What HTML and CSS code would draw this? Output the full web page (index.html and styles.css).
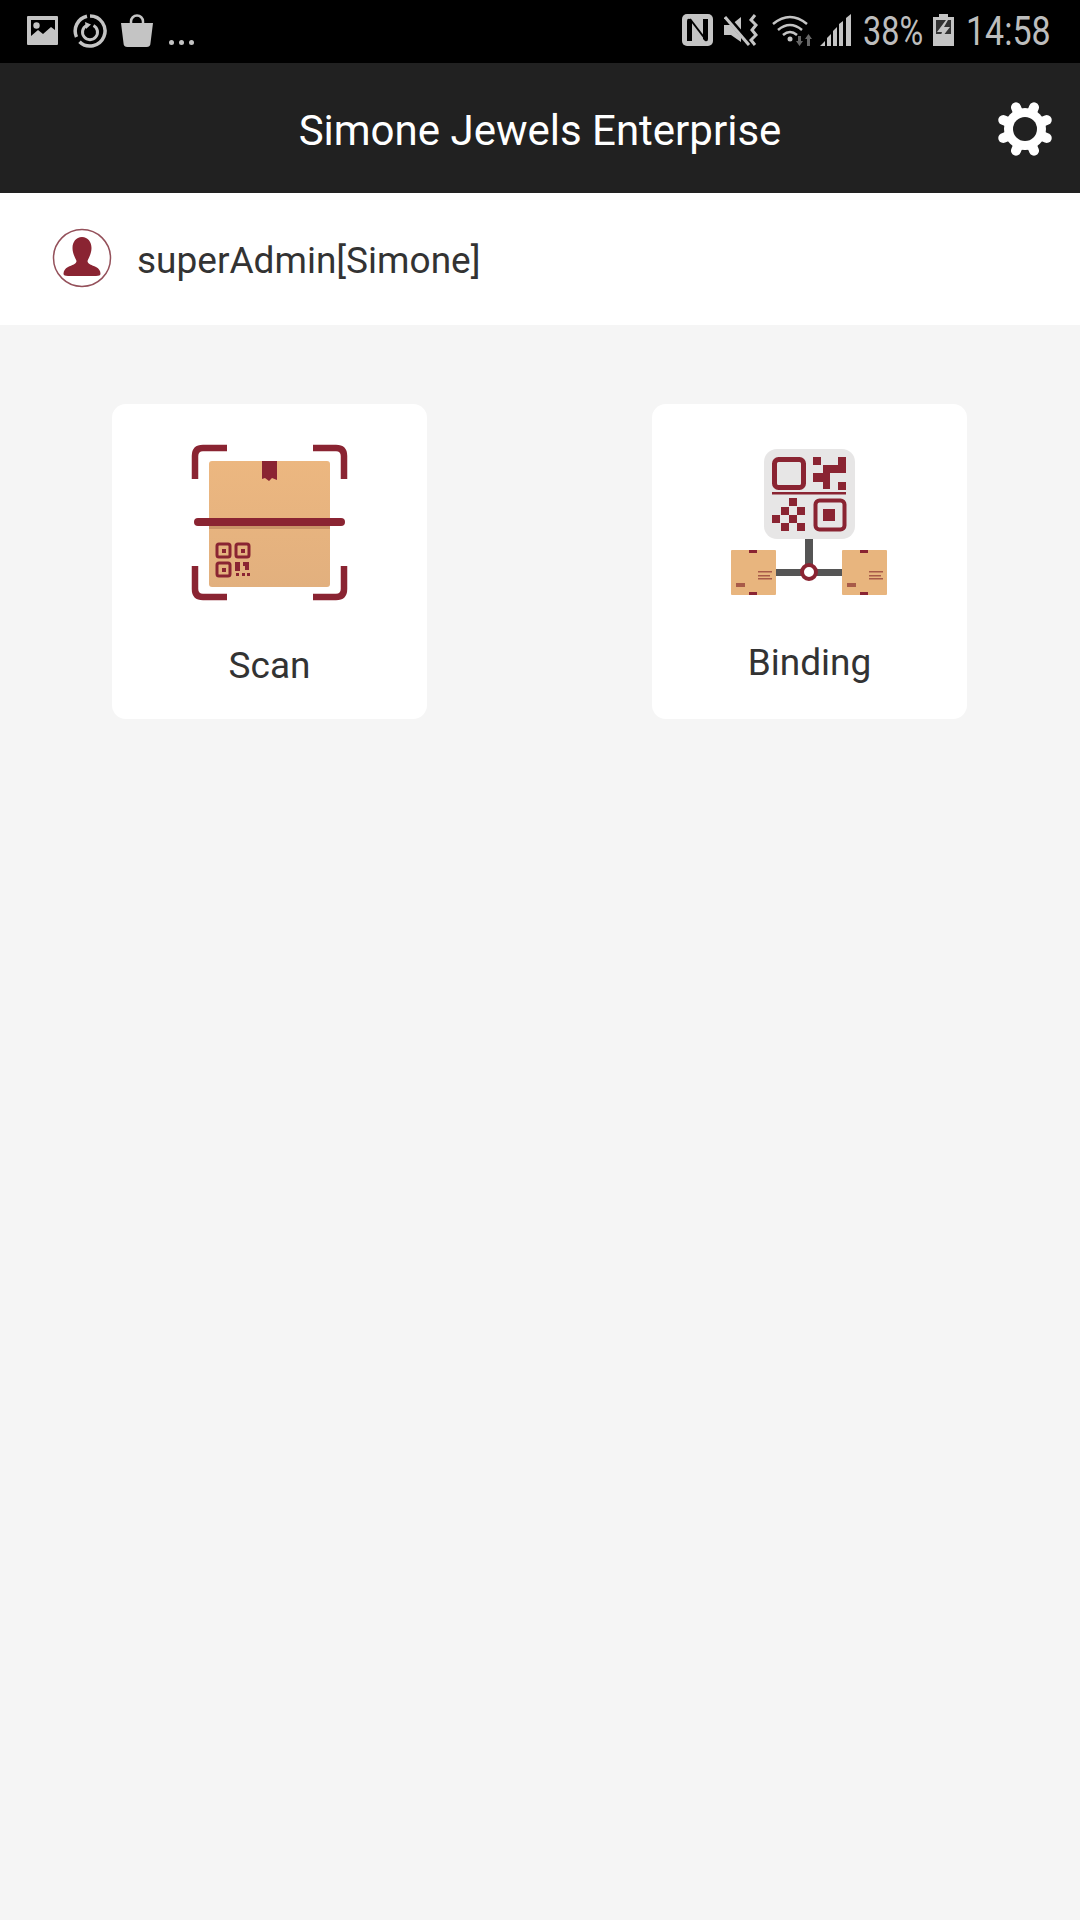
FILE: index.html
```html
<!DOCTYPE html>
<html lang="en">
<head>
    <meta charset="UTF-8">
    <meta name="viewport" content="width=device-width, initial-scale=1.0">
    <title>Simone Jewels Enterprise</title>
    <link rel="stylesheet" href="styles.css">
</head>
<body>

<!-- Status bar -->
<div class="status-bar">
    <div class="status-left">
        <svg class="st-image" viewBox="0 0 31 29">
            <path fill="#c4c4c4" fill-rule="evenodd" d="M1 0H30a1 1 0 0 1 1 1V28a1 1 0 0 1-1 1H1a1 1 0 0 1-1-1V1a1 1 0 0 1 1-1ZM4 4V20L11 14L16 18L24 11L28 14V4Z"/>
            <circle cx="9.500" cy="9.500" r="3.200" fill="#c4c4c4"/>
        </svg>
        <svg class="st-ring" viewBox="0 0 34 34">
            <path fill="none" stroke="#c4c4c4" stroke-width="3.500" d="M17 2A15 15 0 1 1 6.500 27.700M3.500 23A15 15 0 0 1 14 2.300"/>
            <path fill="none" stroke="#c4c4c4" stroke-width="3" d="M13.500 11.500A7.500 7.500 0 1 0 20.500 11.500"/>
            <path fill="#c4c4c4" d="M12 8L18 10.500L13 15Z"/>
        </svg>
        <svg class="st-bag" viewBox="0 0 32 33">
            <path fill="none" stroke="#c4c4c4" stroke-width="2.500" d="M10 10V7.500a6 6 0 0 1 12 0V10"/>
            <path fill="#c4c4c4" d="M0 9H32L29.500 29a4 4 0 0 1-4 4H6.500a4 4 0 0 1-4-4Z"/>
        </svg>
        <div class="st-dots"><span></span><span></span><span></span></div>
    </div>
    <div class="status-right">
        <svg class="st-nfc" viewBox="0 0 31 32">
            <rect width="31" height="32" rx="5" fill="#c4c4c4"/>
            <path fill="#000" d="M5 27V7Q5 4 8 5L10 7V27ZM21 5H26V25Q26 28 23 27L21 25Z"/>
            <path fill="none" stroke="#000" stroke-width="2" d="M8 5L24 26"/>
        </svg>
        <svg class="st-mute" viewBox="0 0 36 32">
            <path fill="#c4c4c4" d="M0 11H7L17 3V28L7 21H0Z"/>
            <path stroke="#000" stroke-width="5" d="M2 2L26 30"/>
            <path stroke="#c4c4c4" stroke-width="3" d="M1 3L25 31"/>
            <path fill="none" stroke="#c4c4c4" stroke-width="3" d="M31 1L27 6L32 11L28 16L32 21L27 26L31 31"/>
        </svg>
        <svg class="st-wifi" viewBox="0 0 44 32">
            <path fill="none" stroke="#c4c4c4" stroke-width="2.500" d="M1 10Q18 -4 35 10M6 16Q18 6 30 16M11 21Q18 15 25 21"/>
            <circle cx="18" cy="25" r="2.500" fill="#c4c4c4"/>
            <path fill="#666" d="M26 22H29V27H31L27.500 32L24 27H26ZM35 32V25H33L36.500 20L40 25H38V32Z"/>
        </svg>
        <svg class="st-signal" viewBox="0 0 32 32">
            <path fill="#c4c4c4" d="M0 32L5 27V32ZM7 32V24L11 20V32ZM13 32V17L17 13V32ZM19 32V10L23 7V32ZM26 32V4L31 0V32Z"/>
        </svg>
        <span class="st-text st-pct">38%</span>
        <svg class="st-batt" viewBox="0 0 21 32">
            <path fill="#c4c4c4" d="M6 0H15V3H21V32H0V3H6Z"/>
            <path fill="#333" d="M3 6H18V20H3Z"/>
            <path fill="#c4c4c4" d="M13 6L4 18H9L6 27L17 13H11L15 6Z"/>
        </svg>
        <span class="st-text st-time">14:58</span>
    </div>
</div>

<!-- Header -->
<div class="header">
    <h1>Simone Jewels Enterprise</h1>
    <svg class="gear" viewBox="0 0 60 60">
        <g stroke="#fff" stroke-width="10" stroke-linecap="round">
            <path d="M30 30m-9 -21.700L39 51.700"/>
            <path d="M30 30m9 -21.700L21 51.700"/>
            <path d="M8.300 21L51.700 39"/>
            <path d="M8.300 39L51.700 21"/>
        </g>
        <circle cx="30" cy="30" r="21" fill="#fff"/>
        <circle cx="30" cy="30" r="12" fill="#212121"/>
    </svg>
</div>

<!-- User row -->
<div class="user-row">
    <svg class="avatar" viewBox="0 0 60 60">
        <circle cx="30" cy="30" r="28.500" fill="#fff" stroke="#94505a" stroke-width="1.500"/>
        <path fill="#8a2432" d="M30 9C36 9 39.500 14 39.500 20C39.500 26 36.500 30 35.500 33C35.500 36 40 37 44 39C47 40.500 48.500 43 48.500 46C48.500 47 47 48 44 48H16C13 48 11.500 47 11.500 46C11.500 43 13 40.500 16 39C20 37 24.500 36 24.500 33C23.500 30 20.500 26 20.500 20C20.500 14 24 9 30 9Z"/>
    </svg>
    <span class="user-name">superAdmin[Simone]</span>
</div>

<!-- Menu cards -->
<div class="menu">
    <div class="card card-scan">
        <svg class="icon-scan" viewBox="0 0 200 200">
            <defs>
                <linearGradient id="boxFill" x1="0" y1="0" x2="0" y2="1">
                    <stop offset="0" stop-color="#ecb780"/>
                    <stop offset="1" stop-color="#e2b07e"/>
                </linearGradient>
            </defs>
            <rect x="39" y="41" width="121" height="126" rx="3" fill="url(#boxFill)"/>
            <path fill="#8a2432" d="M92 41H107V60L102 58L99 61L95 58L92 59Z"/>
            <rect x="39" y="105" width="121" height="4" fill="#c99468"/>
            <rect x="24" y="98" width="151" height="8" rx="4" fill="#8a2432"/>
            <g fill="none" stroke="#8a2432" stroke-width="6.500">
                <path d="M25 59V36Q25 28 33 28H57"/>
                <path d="M143 28H166Q174 28 174 36V59"/>
                <path d="M25 146V169Q25 177 33 177H57"/>
                <path d="M143 177H166Q174 177 174 169V146"/>
            </g>
            <g fill="none" stroke="#8a2432" stroke-width="3">
                <rect x="47" y="124" width="13" height="13" rx="2"/>
                <rect x="66" y="124" width="13" height="13" rx="2"/>
                <rect x="47" y="143" width="13" height="13" rx="2"/>
            </g>
            <g fill="#8a2432">
                <rect x="52" y="129" width="4" height="4"/>
                <rect x="71" y="129" width="4" height="4"/>
                <rect x="52" y="148" width="4" height="4"/>
                <path d="M65 142H70V146H73V142H79V150H75V146H70V151H65Z"/>
                <rect x="66" y="153" width="3" height="3"/>
                <rect x="72" y="153" width="3" height="3"/>
                <rect x="77" y="153" width="3" height="3"/>
            </g>
        </svg>
        <div class="card-label">Scan</div>
    </div>
    <div class="card card-binding">
        <svg class="icon-binding" viewBox="0 0 200 180">
            <rect x="54" y="19" width="91" height="90" rx="13" fill="#e7e6e6"/>
            <g fill="none" stroke="#8a2432">
                <rect x="64.500" y="29.500" width="29" height="28" rx="4" stroke-width="5"/>
                <rect x="105.500" y="70.500" width="29" height="29" rx="4" stroke-width="4"/>
            </g>
            <g fill="#8a2432">
                <rect x="62" y="62" width="74" height="2.500"/>
                <rect x="113" y="79" width="12" height="12"/>
                <rect x="103" y="27" width="8" height="8"/>
                <path d="M128 27H136V43H120V59H113V52H103V43H113V35H128Z"/>
                <rect x="128" y="52" width="8" height="8"/>
                <rect x="79" y="68" width="8" height="8"/>
                <rect x="71" y="77" width="8" height="8"/>
                <rect x="87" y="77" width="8" height="8"/>
                <rect x="62" y="85" width="8" height="8"/>
                <rect x="79" y="85" width="8" height="8"/>
                <rect x="71" y="93" width="8" height="8"/>
                <rect x="87" y="93" width="8" height="8"/>
            </g>
            <rect x="95" y="109" width="8" height="32" fill="#555"/>
            <rect x="66" y="139" width="66" height="7" fill="#555"/>
            <circle cx="99" cy="142" r="7" fill="#fff" stroke="#8a2432" stroke-width="4"/>
            <rect x="21" y="120" width="45" height="45" rx="1" fill="#e8b57e"/>
            <rect x="132" y="120" width="45" height="45" rx="1" fill="#e8b57e"/>
            <g fill="#8a2432">
                <rect x="39" y="120" width="8" height="3"/>
                <rect x="39" y="162" width="8" height="3"/>
                <rect x="150" y="120" width="8" height="3"/>
                <rect x="150" y="162" width="8" height="3"/>
            </g>
            <g fill="#a85a48">
                <rect x="48" y="141" width="14" height="1.500"/>
                <rect x="48" y="145" width="12" height="1.500"/>
                <rect x="48" y="148" width="14" height="1.500"/>
                <rect x="26" y="153" width="9" height="4"/>
                <rect x="159" y="141" width="14" height="1.500"/>
                <rect x="159" y="145" width="12" height="1.500"/>
                <rect x="159" y="148" width="14" height="1.500"/>
                <rect x="137" y="153" width="9" height="4"/>
            </g>
        </svg>
        <div class="card-label">Binding</div>
    </div>
</div>

</body>
</html>
```

FILE: styles.css
```css
body {
    font-family: Roboto, Arial, sans-serif;
    background-color: #f5f5f5;
    margin: 0;
    padding: 0;
    min-height: 100vh;
    color: #333;
}

/* Status bar */
.status-bar {
    height: 63px;
    background-color: #000;
    display: flex;
    justify-content: space-between;
    align-items: flex-start;
    padding: 0 30px 0 27px;
    box-sizing: border-box;
}

.status-left,
.status-right {
    display: flex;
    align-items: flex-start;
}

.st-image { width: 31px; height: 29px; margin-top: 16px; }
.st-ring { width: 34px; height: 34px; margin: 14px 0 0 15px; }
.st-bag { width: 32px; height: 33px; margin: 14px 0 0 14px; }

.st-dots {
    display: flex;
    gap: 5px;
    margin: 40px 0 0 16px;
}

.st-dots span {
    width: 5px;
    height: 5px;
    border-radius: 50%;
    background-color: #c4c4c4;
}

.st-nfc { width: 31px; height: 32px; margin-top: 14px; }
.st-mute { width: 36px; height: 32px; margin: 14px 0 0 11px; }
.st-wifi { width: 44px; height: 32px; margin: 14px 0 0 12px; }
.st-signal { width: 32px; height: 32px; margin: 14px 0 0 4px; }
.st-batt { width: 21px; height: 32px; margin: 14px 0 0 9px; }

.st-text {
    color: #bdbdbd;
    font-size: 40px;
    line-height: 63px;
    display: block;
    transform-origin: left center;
}

.st-pct {
    width: 61px;
    margin-left: 11px;
    transform: scaleX(0.81);
}

.st-time {
    width: 84px;
    margin-left: 12px;
    transform: scaleX(0.85);
}

/* Header */
.header {
    height: 130px;
    background-color: #212121;
    display: flex;
    align-items: center;
    justify-content: center;
    position: relative;
}

.header h1 {
    margin: 4px 0 0;
    color: #fff;
    font-size: 42px;
    font-weight: 400;
}

.gear {
    position: absolute;
    right: 25px;
    top: 36px;
    width: 60px;
    height: 60px;
}

/* User row */
.user-row {
    height: 132px;
    background-color: #fff;
    display: flex;
    align-items: center;
    padding-left: 52px;
}

.avatar {
    width: 60px;
    height: 60px;
    margin-top: -2px;
}

.user-name {
    margin: 2px 0 0 25px;
    font-size: 37px;
}

/* Menu cards */
.menu {
    display: flex;
    justify-content: space-between;
    padding: 79px 113px 0 112px;
}

.card {
    width: 315px;
    height: 315px;
    background-color: #fff;
    border-radius: 14px;
    display: flex;
    flex-direction: column;
    align-items: center;
    box-sizing: border-box;
}

.card-scan {
    padding-top: 16px;
}

.card-binding {
    padding-top: 26px;
}

.icon-scan {
    width: 200px;
    height: 200px;
}

.icon-binding {
    width: 200px;
    height: 180px;
}

.card-label {
    font-size: 37px;
    line-height: 44px;
    margin-top: 24px;
}

.card-binding .card-label {
    margin-top: 31px;
}
```
